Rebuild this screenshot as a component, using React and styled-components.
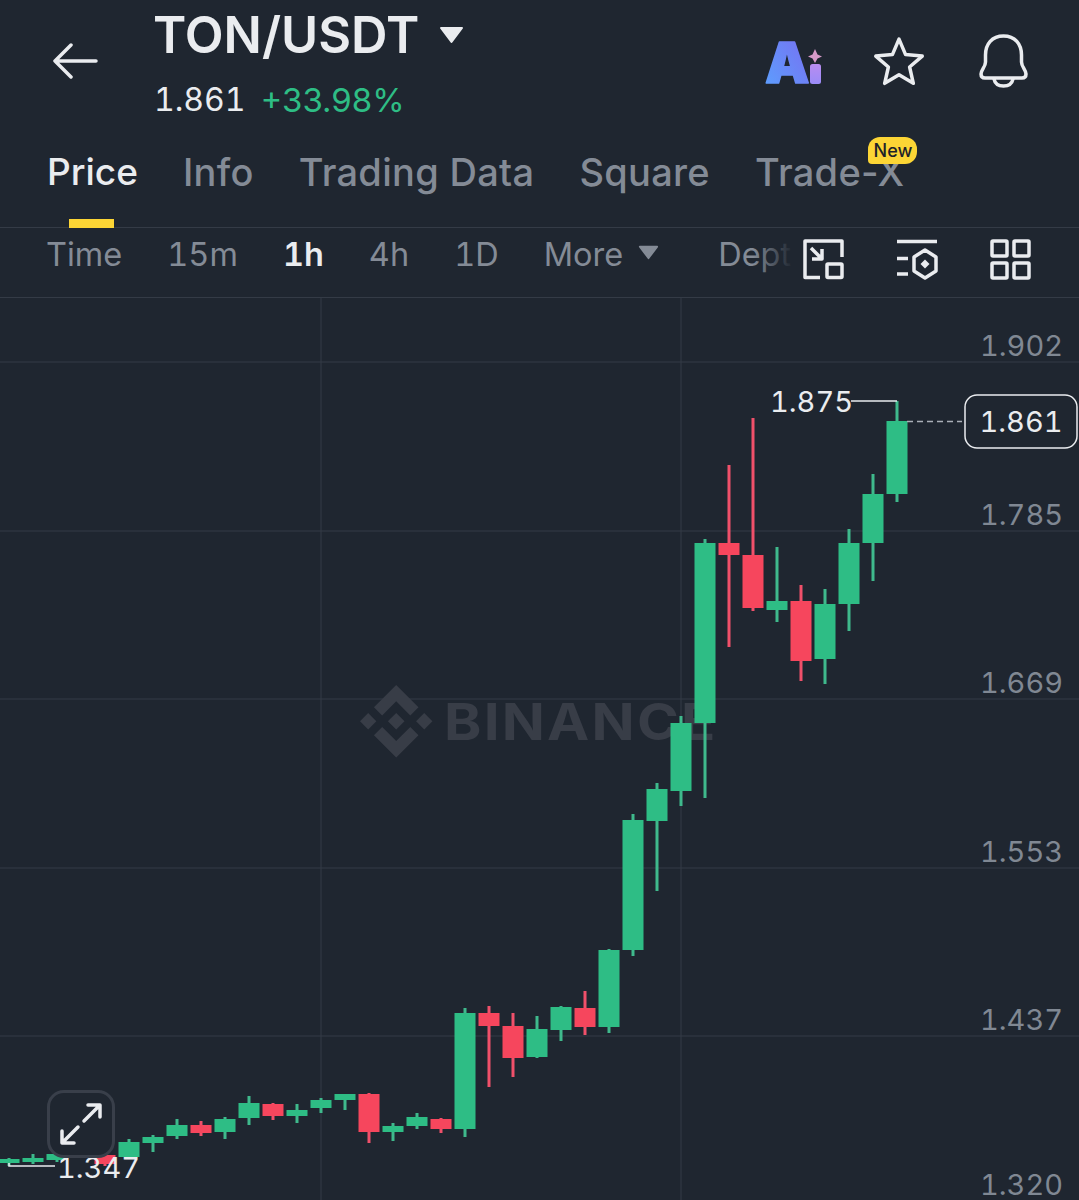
import React from "react";
import styled, { createGlobalStyle } from "styled-components";

const BG = "#1f2630";
const GREEN = "#2ebd85";
const RED = "#f6465d";
const GRID = "#343b46";
const LIGHT = "#eaecef";
const GREY = "#848b96";

const GlobalStyle = createGlobalStyle`
  html, body {
    margin: 0;
    padding: 0;
    background: ${BG};
  }
  * {
    box-sizing: border-box;
  }
`;

const Page = styled.div`
  width: 1079px;
  height: 1200px;
  overflow: hidden;
  background: ${BG};
  font-family: Inter, "Liberation Sans", sans-serif;
  color: ${LIGHT};
`;

const Header = styled.header`
  display: flex;
  height: 136px;
  padding-left: 52px;
`;

const BackIcon = styled.svg`
  width: 46px;
  height: 36px;
  margin-top: 43px;
  margin-right: 55px;
  flex: none;
`;

const TitleBlock = styled.div`
  flex: 1;
  padding-top: 10px;
`;

const TitleRow = styled.div`
  display: flex;
  align-items: center;
  gap: 20px;
  height: 50px;
`;

const Title = styled.h1`
  margin: 0;
  font-size: 50.5px;
  font-weight: 600;
  line-height: 50px;
`;

const Caret = styled.svg`
  width: ${({ $size }) => $size}px;
  height: ${({ $size }) => Math.round($size * 0.72)}px;
  margin-top: ${({ $top }) => $top}px;
  flex: none;
`;

const SubRow = styled.div`
  display: flex;
  gap: 15px;
  margin-top: 20px;
  padding-left: 1px;
  font-size: 33px;
  line-height: 40px;
`;

const LastPrice = styled.span`
  font-size: 32px;
  font-variant-numeric: tabular-nums;
  color: ${LIGHT};
`;

const Change = styled.span`
  color: ${GREEN};
`;

const Actions = styled.div`
  display: flex;
  align-items: flex-start;
  gap: 52px;
  padding-top: 34px;
  padding-right: 51px;
`;

const AiIcon = styled.svg`
  width: 56px;
  height: 42px;
  margin-top: 8px;
  overflow: visible;
`;

const StarIcon = styled.svg`
  width: 52px;
  height: 52px;
  margin-top: 2px;
  margin-right: 2px;
`;

const BellIcon = styled.svg`
  width: 49px;
  height: 54px;
`;

const Tabs = styled.nav`
  display: flex;
  gap: 45px;
  height: 92px;
  padding-left: 47px;
  border-bottom: 1px solid ${GRID};
`;

const Tab = styled.div`
  position: relative;
  height: 92px;
  padding-top: 16px;
  font-size: ${({ $active }) => ($active ? 37 : 38)}px;
  letter-spacing: ${({ $active }) => ($active ? 0 : 0.3)}px;
  font-weight: 500;
  line-height: 40px;
  color: ${({ $active }) => ($active ? LIGHT : GREY)};

  ${({ $active }) =>
    $active &&
    `&::after {
      content: "";
      position: absolute;
      left: 50%;
      bottom: 0;
      width: 45px;
      height: 9px;
      margin-left: -23px;
      background: #fcd535;
    }`}
`;

const NewBadge = styled.span`
  position: absolute;
  top: 1px;
  right: -13px;
  width: 49px;
  height: 27px;
  border-radius: 12px 12px 12px 4px;
  background: #fcd535;
  color: #1e2329;
  font-size: 18px;
  font-weight: 500;
  letter-spacing: 0;
  line-height: 27px;
  text-align: center;
`;

const Toolbar = styled.div`
  display: flex;
  height: 70px;
  border-bottom: 1px solid ${GRID};
`;

const Intervals = styled.div`
  position: relative;
  display: flex;
  flex: 1;
  gap: 45px;
  padding-left: 46px;
  padding-top: 6px;
  overflow: hidden;
  white-space: nowrap;

  &::after {
    content: "";
    position: absolute;
    top: 0;
    right: 0;
    bottom: 0;
    width: 50px;
    background: linear-gradient(to right, rgba(31, 38, 48, 0), ${BG} 80%);
  }
`;

const Interval = styled.span`
  display: flex;
  align-items: center;
  gap: 15px;
  height: 40px;
  font-size: 32.5px;
  font-variant-numeric: tabular-nums;
  font-weight: ${({ $active }) => ($active ? 600 : 400)};
  margin-left: ${({ $push }) => $push || 0}px;
  color: ${({ $active }) => ($active ? LIGHT : GREY)};
`;

const Tools = styled.div`
  display: flex;
  flex: none;
  gap: 52px;
  padding-top: 11px;
  padding-right: 48px;
`;

const ToolIcon = styled.svg`
  width: ${({ $w }) => $w}px;
  height: 41px;
`;

const ChartArea = styled.main`
  position: relative;
  height: 902px;
`;

const ChartSvg = styled.svg`
  display: block;
  width: 1079px;
  height: 902px;
`;

const AxisLabel = styled.text`
  font-family: Inter, "Liberation Sans", sans-serif;
  font-size: 29px;
  font-variant-numeric: tabular-nums;
  fill: #808893;
  text-anchor: end;
`;

const MarkLabel = styled.text`
  font-family: Inter, "Liberation Sans", sans-serif;
  font-size: 29px;
  font-variant-numeric: tabular-nums;
  fill: ${LIGHT};
  text-anchor: ${({ $anchor }) => $anchor || "start"};
`;

const Watermark = styled.text`
  font-family: Inter, "Liberation Sans", sans-serif;
  font-size: 51px;
  font-weight: 700;
  letter-spacing: 2px;
  fill: #383d47;
`;

const FullscreenButton = styled.button`
  position: absolute;
  left: 47px;
  top: 792px;
  display: flex;
  align-items: center;
  justify-content: center;
  width: 68px;
  height: 68px;
  padding: 0;
  border: 3px solid #393f4a;
  border-radius: 17px;
  background: ${BG};
`;

const hLines = [362, 531, 699, 868, 1036];
const vLines = [321, 681];
const axis = [
  ["1.902", 356],
  ["1.785", 525],
  ["1.669", 693],
  ["1.553", 862],
  ["1.437", 1030],
  ["1.320", 1195],
];

// x, body top, body bottom, wick top, wick bottom, up
const candles = [
  [9, 1159, 1163, 1158, 1166, true],
  [33, 1158, 1162, 1154, 1164, true],
  [57, 1154, 1160, 1152, 1162, true],
  [105, 1155, 1164, 1154, 1166, false],
  [129, 1142, 1157, 1139, 1158, true],
  [153, 1137, 1143, 1135, 1152, true],
  [177, 1125, 1136, 1119, 1139, true],
  [201, 1125, 1133, 1121, 1136, false],
  [225, 1119, 1132, 1117, 1139, true],
  [249, 1103, 1118, 1096, 1125, true],
  [273, 1104, 1116, 1103, 1120, false],
  [297, 1110, 1116, 1104, 1123, true],
  [321, 1100, 1108, 1098, 1113, true],
  [345, 1094, 1100, 1094, 1110, true],
  [369, 1094, 1132, 1093, 1143, false],
  [393, 1126, 1132, 1123, 1141, true],
  [417, 1117, 1126, 1113, 1129, true],
  [441, 1119, 1129, 1118, 1133, false],
  [465, 1013, 1129, 1008, 1137, true],
  [489, 1013, 1026, 1006, 1087, false],
  [513, 1026, 1058, 1013, 1077, false],
  [537, 1029, 1057, 1016, 1058, true],
  [561, 1007, 1030, 1006, 1041, true],
  [585, 1008, 1027, 991, 1035, false],
  [609, 950, 1027, 949, 1033, true],
  [633, 820, 950, 814, 956, true],
  [657, 789, 821, 783, 891, true],
  [681, 723, 791, 716, 806, true],
  [705, 543, 723, 539, 798, true],
  [729, 543, 555, 465, 647, false],
  [753, 555, 608, 418, 611, false],
  [777, 601, 610, 547, 622, true],
  [801, 601, 661, 585, 681, false],
  [825, 604, 659, 589, 684, true],
  [849, 543, 604, 529, 631, true],
  [873, 494, 543, 474, 581, true],
  [897, 421, 494, 401, 502, true],
];

const BinanceMark = () => (
  <g transform="translate(360 685) scale(0.572)" fill="#383d47">
    <path d="M38.73 53.2l24.59-24.58 24.6 24.6 14.3-14.31L63.32 0 24.43 38.9l14.3 14.3z" />
    <path d="M0 63.31l14.3-14.31 14.31 14.31-14.31 14.3L0 63.31z" />
    <path d="M38.73 73.41l24.59 24.59 24.6-24.6 14.31 14.29-38.9 38.91-38.91-38.88-.02-.02 14.33-14.29z" />
    <path d="M98.01 63.31l14.3-14.3 14.3 14.3-14.3 14.3-14.3-14.3z" />
    <path d="M77.83 63.3L63.32 48.78 52.59 59.51l-1.24 1.23-2.54 2.54 14.51 14.52 14.51-14.51.01-.01z" />
  </g>
);

const Chart = () => (
  <ChartSvg viewBox="0 298 1079 902">
    {hLines.map((y) => (
      <line key={y} x1="0" x2="1079" y1={y} y2={y} stroke={GRID} strokeWidth="1" />
    ))}
    {vLines.map((x) => (
      <line key={x} x1={x} x2={x} y1="298" y2="1200" stroke={GRID} strokeWidth="1" />
    ))}

    <BinanceMark />
    <Watermark transform="translate(444 740) scale(1.11 1)">BINANCE</Watermark>

    {axis.map(([label, y]) => (
      <AxisLabel key={label} x="1063" y={y}>{label}</AxisLabel>
    ))}

    {candles.map(([x, top, bottom, wickTop, wickBottom, up]) => (
      <g key={x}>
        <rect x={x - 1.5} y={wickTop} width="3" height={wickBottom - wickTop} fill={up ? "#3fb98c" : "#f0506a"} />
        <rect x={x - 10.5} y={top} width="21" height={bottom - top} fill={up ? GREEN : RED} />
      </g>
    ))}

    <path d="M851 401H897" stroke={LIGHT} strokeWidth="1.5" fill="none" />
    <MarkLabel x="770" y="412">1.875</MarkLabel>

    <path d="M907 421.5H962" stroke="#aab0b8" strokeWidth="1.5" strokeDasharray="6 4" />
    <rect x="965" y="395" width="112" height="53" rx="12" fill={BG} stroke={LIGHT} strokeWidth="1.5" />
    <MarkLabel x="1021" y="432" $anchor="middle">1.861</MarkLabel>

    <path d="M9 1163V1166H55" stroke={LIGHT} strokeWidth="1.5" fill="none" />
    <MarkLabel x="57" y="1178">1.347</MarkLabel>
  </ChartSvg>
);

export default function App() {
  return (
    <Page>
      <GlobalStyle />
      <Header>
        <BackIcon viewBox="0 0 46 36" fill="none" stroke={LIGHT} strokeWidth="3.5" strokeLinecap="round" strokeLinejoin="round">
          <path d="M44 18H3M19 2L3 18L19 34" />
        </BackIcon>
        <TitleBlock>
          <TitleRow>
            <Title>TON/USDT</Title>
            <Caret $size={25} $top={0} viewBox="0 0 25 18">
              <path d="M2 2H23L12.5 16Z" fill={LIGHT} stroke={LIGHT} strokeWidth="2" strokeLinejoin="round" />
            </Caret>
          </TitleRow>
          <SubRow>
            <LastPrice>1.861</LastPrice>
            <Change>+33.98%</Change>
          </SubRow>
        </TitleBlock>
        <Actions>
          <AiIcon viewBox="0 0 56 42">
            <defs>
              <linearGradient id="aiBlue" x1="0" y1="1" x2="1" y2="0">
                <stop offset="0" stopColor="#5aa2ff" />
                <stop offset="1" stopColor="#7a6cf0" />
              </linearGradient>
              <linearGradient id="aiStem" x1="0" y1="0" x2="0" y2="1">
                <stop offset="0" stopColor="#b98cf0" />
                <stop offset="1" stopColor="#9a8cf8" />
              </linearGradient>
            </defs>
            <text x="0" y="41" fontFamily="Inter, sans-serif" fontSize="56" fontWeight="900" fill="url(#aiBlue)" stroke="url(#aiBlue)" strokeWidth="1.5" strokeLinejoin="round">A</text>
            <rect x="45" y="22" width="11" height="20" rx="2.5" fill="url(#aiStem)" />
            <path d="M50 7L52.5 12.5L57 14.5L52.5 16.5L50 21L47.5 16.5L43 14.5L47.5 12.5Z" fill="#d69ac8" />
          </AiIcon>
          <StarIcon viewBox="0 0 49 49" fill="none" stroke={LIGHT} strokeWidth="3.3" strokeLinejoin="round">
            <path d="M24.5 3L30.7 17.5L46.4 18.9L34.5 29.2L38 44.6L24.5 36.5L11 44.6L14.5 29.2L2.6 18.9L18.3 17.5Z" />
          </StarIcon>
          <BellIcon viewBox="0 0 49 54" fill="none" stroke={LIGHT} strokeWidth="3.5" strokeLinecap="round" strokeLinejoin="round">
            <path d="M24.5 2C13 2 6.5 10 6.5 21V28C6.5 33 2 36 2 40C2 43 3.5 44 6 44H43C45.5 44 47 43 47 40C47 36 42.5 33 42.5 28V21C42.5 10 36 2 24.5 2Z" />
            <path d="M15 45C16 50 20 52 24.5 52C29 52 33 50 34 45" />
          </BellIcon>
        </Actions>
      </Header>

      <Tabs>
        <Tab $active>Price</Tab>
        <Tab>Info</Tab>
        <Tab>Trading Data</Tab>
        <Tab>Square</Tab>
        <Tab>
          Trade-X
          <NewBadge>New</NewBadge>
        </Tab>
      </Tabs>

      <Toolbar>
        <Intervals>
          <Interval>Time</Interval>
          <Interval>15m</Interval>
          <Interval $active>1h</Interval>
          <Interval>4h</Interval>
          <Interval>1D</Interval>
          <Interval>
            More
            <Caret $size={21} $top={-4} viewBox="0 0 25 18">
              <path d="M2 2H23L12.5 16Z" fill={GREY} stroke={GREY} strokeWidth="2" strokeLinejoin="round" />
            </Caret>
          </Interval>
          <Interval $push={14}>Depth</Interval>
        </Intervals>
        <Tools>
          <ToolIcon $w={41} viewBox="0 0 41 41" fill="none" stroke={LIGHT} strokeWidth="3.5" strokeLinejoin="round">
            <path d="M17 38.5H2V2H39V18" />
            <rect x="24" y="25" width="15" height="13.5" rx="1" />
            <path d="M8 9L19 20M19 10V20H9" />
          </ToolIcon>
          <ToolIcon $w={42} viewBox="0 0 42 41" fill="none" stroke={LIGHT} strokeWidth="3.5" strokeLinejoin="round">
            <path d="M1 2.5H41M1 19.5H12M1 35H12" />
            <path d="M29 11L40 18V32L29 39L18 32V18Z" />
            <path d="M29 20.5L33.5 25L29 29.5L24.5 25Z" fill={LIGHT} stroke="none" />
          </ToolIcon>
          <ToolIcon $w={41} viewBox="0 0 41 41" fill="none" stroke={LIGHT} strokeWidth="3.5" strokeLinejoin="round">
            <rect x="2" y="2" width="15" height="15" rx="1" />
            <rect x="24" y="2" width="15" height="15" rx="1" />
            <rect x="2" y="24" width="15" height="15" rx="1" />
            <rect x="24" y="24" width="15" height="15" rx="1" />
          </ToolIcon>
        </Tools>
      </Toolbar>

      <ChartArea>
        <Chart />
        <FullscreenButton aria-label="Fullscreen">
          <svg width="46" height="46" viewBox="0 0 46 46" fill="none" stroke={LIGHT} strokeWidth="3.5" strokeLinecap="round" strokeLinejoin="round">
            <path d="M26 20L41 5M30 4H42V16" />
            <path d="M20 26L5 41M4 30V42H16" />
          </svg>
        </FullscreenButton>
      </ChartArea>
    </Page>
  );
}
